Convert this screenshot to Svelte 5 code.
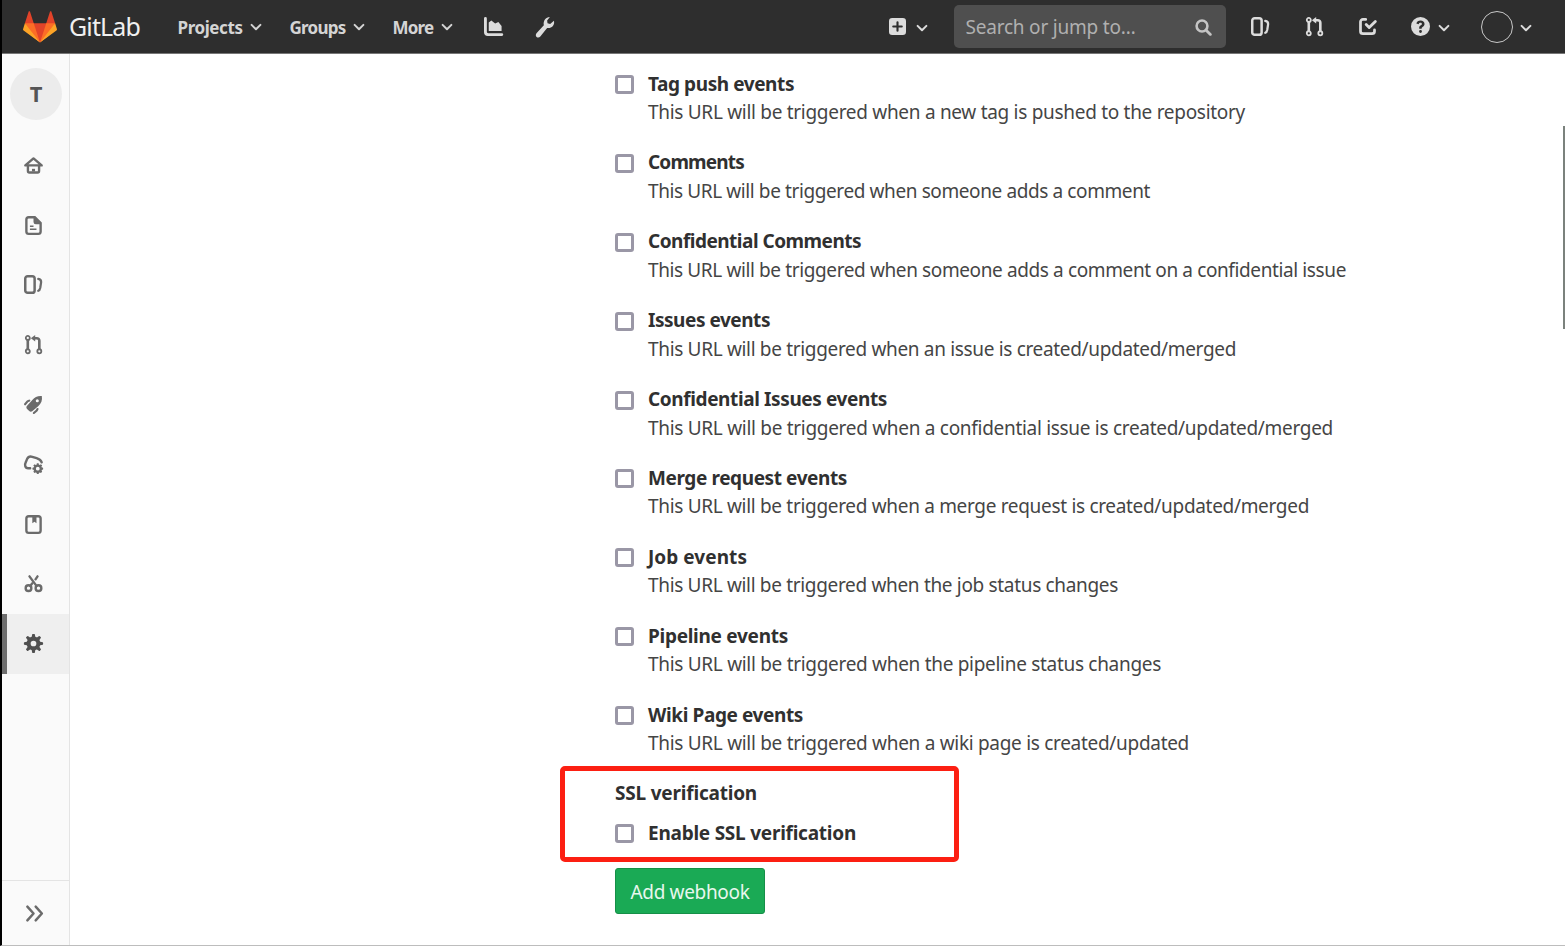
<script>
  const teeth = [0, 45, 90, 135, 180, 225, 270, 315]
    .map((a) => `<path d="M6.2 4.200 6.900.2c.2-.4 2-.4 2.200 0l.7 4z" transform="rotate(${a} 8 8)"/>`)
    .join('');
  const smallTeeth = [0, 45, 90, 135, 180, 225, 270, 315]
    .map((a) => `<rect x="10.7" y="7" width="1.8" height="2.4" rx=".4" transform="rotate(${a} 11.6 11.5)"/>`)
    .join('');
  const line = 'fill="none" stroke="currentColor"';

  const icons = {
    chevron: `<path ${line} stroke-width="2" stroke-linecap="round" stroke-linejoin="round" d="M3.6 5.9 8 10.3l4.4-4.4"/>`,
    chart: `<path d="M1.200 0a1.200 1.200 0 0 1 1.200 1.200v11.2c0 .7.4 1.200 1.200 1.200H15a1.200 1.200 0 0 1 0 2.400H3.2C1.2 16 0 14.8 0 12.8V1.200A1.200 1.200 0 0 1 1.200 0z"/><path d="M4 11.800V4.700l2.200-1.700 3.200 2.400 2.700-1.2 2.700 3.4v4.2z"/>`,
    wrench: `<path d="M12.100.3 10 3l.3 2.200 2 .5 2.900-2.500c.6 2.500-.7 4.900-3.300 5.500-.7.2-1.300.2-1.900 0l-5.2 6.600c-.8.900-2 1-2.800.3s-.8-2-.1-2.900L7.500 6.700C6.800 3.400 8.900.3 12.100.3z"/>`,
    plus: `<path fill-rule="evenodd" d="M3 0h10a3 3 0 0 1 3 3v10a3 3 0 0 1-3 3H3a3 3 0 0 1-3-3V3a3 3 0 0 1 3-3zm4 7H4a1 1 0 0 0 0 2h3v3a1 1 0 0 0 2 0V9h3a1 1 0 0 0 0-2H9V4a1 1 0 0 0-2 0z"/>`,
    search: `<circle cx="6.6" cy="6.6" r="5.1" ${line} stroke-width="2.4"/><path d="m10.5 10.5 4 4" ${line} stroke-width="2.6" stroke-linecap="round"/>`,
    issues: `<rect x="1.050" y="1.050" width="7.900" height="13.900" rx="2" ${line} stroke-width="2.100"/><path ${line} stroke-width="1.900" stroke-linecap="round" d="M12 3.200c2.200.3 2.600 1.200 2.400 3l-.7 4.500c-.3 1.600-.6 2.200-1.700 2.600"/>`,
    merge: `<g ${line}><circle cx="3.200" cy="2.500" r="1.700" stroke-width="1.500"/><circle cx="3.200" cy="13.700" r="1.700" stroke-width="1.500"/><circle cx="12.900" cy="13.700" r="1.700" stroke-width="1.500"/><path stroke-width="2.200" d="M3.200 4.300v7.500M8.200 2.700h2.600a2.100 2.100 0 0 1 2.100 2.100v7"/></g><path d="M9.400 0v5.400L5.800 2.700z"/>`,
    todo: `<path ${line} stroke-width="2.3" stroke-linecap="round" d="M6.500 2H4.2a2.100 2.100 0 0 0-2.100 2.100v7.800A2.100 2.100 0 0 0 4.200 14h7.600a2.100 2.100 0 0 0 2.100-2.100v-1"/><path ${line} stroke-width="2.4" stroke-linecap="round" stroke-linejoin="round" d="M6.900 6.400 9.400 8.900 14.600 3.700"/>`,
    help: `<path fill-rule="evenodd" d="M8 0a8 8 0 1 1 0 16A8 8 0 0 1 8 0zM6.9 9.1v.8h2.1v-.6c0-.4.4-.7 1-1.1.9-.6 1.4-1.3 1.4-2.3C11.400 4 9.900 3 8 3 6.200 3 4.900 3.900 4.500 5.500l2 .5c.2-.8.7-1.200 1.500-1.200.7 0 1.200.4 1.200 1 0 .5-.3.8-.9 1.200-.9.6-1.400 1.200-1.400 2.100zM8 11a1.200 1.200 0 1 0 0 2.400A1.200 1.200 0 0 0 8 11z"/>`,
    home: `<path ${line} stroke-width="2" stroke-linejoin="round" stroke-linecap="round" d="M1.100 7.900h13.800L8 2zM3.300 8v4.700c0 .8.4 1.200 1.200 1.200h7c.8 0 1.200-.4 1.200-1.200V8"/><path d="M6.700 10.800h2.600V13H6.700z"/>`,
    doc: `<path fill-rule="evenodd" d="M4 0h5.500L15 5.500V13a3 3 0 0 1-3 3H4a3 3 0 0 1-3-3V3a3 3 0 0 1 3-3zm0 2a1 1 0 0 0-1 1v10a1 1 0 0 0 1 1h8a1 1 0 0 0 1-1V7h-3a2 2 0 0 1-2-2V2z"/><path d="M5 8h3v1.200H5zM5 10.500h5.500v1.200H5z"/>`,
    rocket: `<path fill-rule="evenodd" d="M15 .8c.6 3.700-.4 6.200-3.100 8.700L6.900 13.700c-.9.700-1.900.4-2.700-.4l-1.400-1.400c-.8-.8-1.100-1.800-.4-2.700l4.600-5C9.200 1.600 11.500.5 15 .8zM11.200 3.500a1.300 1.300 0 1 0 0 2.600 1.300 1.300 0 0 0 0-2.600z"/><path ${line} stroke-width="1.800" stroke-linecap="round" d="M4.400 4.700 3 5.400.9 7.800M11.400 11.800 10.700 13l-2.400 2.100"/>`,
    cloud: `<path ${line} stroke-width="2" stroke-linecap="round" d="M5.200 11.200H3.500C.8 11 .3 8.200 1.600 5.800l1-2.400C3.500 1.500 5 .9 7 1.500l3.600 1.200c2.200.7 3.700 1.300 4.300 3.500"/><circle cx="11.600" cy="11.500" r="2.600" ${line} stroke-width="2"/>${smallTeeth}`,
    wiki: `<path fill-rule="evenodd" d="M4 0h8a3 3 0 0 1 3 3v10a3 3 0 0 1-3 3H4a3 3 0 0 1-3-3V3a3 3 0 0 1 3-3zm0 2a1 1 0 0 0-1 1v10a1 1 0 0 0 1 1h8a1 1 0 0 0 1-1V3a1 1 0 0 0-1-1h-1.500v5L8.800 5.700 7 7V2z"/>`,
    scissors: `<g ${line} stroke-width="2"><circle cx="3.800" cy="11.900" r="2.400"/><circle cx="12.200" cy="11.900" r="2.400"/><path stroke-linecap="round" d="m4.600 2 5.900 8M11.400 2 9.700 4.500M6.800 8l-1.400 2"/></g>`,
    gear: `<circle cx="8" cy="8" r="4.100" ${line} stroke-width="3.400"/>${teeth}`,
    collapse: `<path ${line} stroke-width="2.100" stroke-linejoin="round" stroke-linecap="round" d="M2 2.200 7.200 8 2 13.800M9 2.200 14.200 8 9 13.800"/>`
  };

  const menus = [
    { label: 'Projects', width: 65 },
    { label: 'Groups', width: 56 },
    { label: 'More', width: 41 }
  ];
  const sideItems = ['home', 'doc', 'issues', 'merge', 'rocket', 'cloud', 'wiki', 'scissors', 'gear'];

  const events = [
    { title: 'Tag push events', tw: 146, text: 'This URL will be triggered when a new tag is pushed to the repository', w: 597 },
    { title: 'Comments', tw: 96, text: 'This URL will be triggered when someone adds a comment', w: 502 },
    { title: 'Confidential Comments', tw: 213, text: 'This URL will be triggered when someone adds a comment on a confidential issue', w: 698 },
    { title: 'Issues events', tw: 122, text: 'This URL will be triggered when an issue is created/updated/merged', w: 588 },
    { title: 'Confidential Issues events', tw: 239, text: 'This URL will be triggered when a confidential issue is created/updated/merged', w: 685 },
    { title: 'Merge request events', tw: 199, text: 'This URL will be triggered when a merge request is created/updated/merged', w: 661 },
    { title: 'Job events', tw: 99, text: 'This URL will be triggered when the job status changes', w: 470 },
    { title: 'Pipeline events', tw: 140, text: 'This URL will be triggered when the pipeline status changes', w: 513 },
    { title: 'Wiki Page events', tw: 155, text: 'This URL will be triggered when a wiki page is created/updated', w: 541 }
  ];

  // Spreads a label's letters so that it takes the given width.
  function fit(node, width) {
    const natural = node.getBoundingClientRect().width;
    node.style.letterSpacing = `${(width - natural) / node.textContent.length}px`;
  }
</script>

{#snippet icon(name, cls = '')}
  <svg class="icon {cls}" viewBox="0 0 16 16" fill="currentColor" aria-hidden="true">{@html icons[name]}</svg>
{/snippet}

<div class="page">
  <header>
    <svg class="logo" viewBox="0 0 36 36" aria-hidden="true">
      <path fill="#e24329" d="M2 14l9.380 9v-9l-4-12.280c-.205-.632-1.176-.632-1.380 0z" />
      <path fill="#e24329" d="M34 14l-9.380 9v-9l4-12.280c.205-.632 1.176-.632 1.380 0z" />
      <path fill="#e24329" d="M18 34.380 3 14h30z" />
      <path fill="#fc6d26" d="M18 34.380 11.380 14H2l4 11z" />
      <path fill="#fc6d26" d="M18 34.380 24.620 14H34l-4 11z" />
      <path fill="#fca326" d="M2 14 .1 20.160c-.18.565 0 1.200.5 1.560L18 34.380z" />
      <path fill="#fca326" d="M34 14l1.900 6.160c.18.565 0 1.200-.5 1.560L18 34.380z" />
    </svg>
    <span class="brand"><span class="t" use:fit={71}>GitLab</span></span>
    <nav>
      {#each menus as m}
        <span class="menu"><span class="t" use:fit={m.width}>{m.label}</span>{@render icon('chevron', 'chev')}</span>
      {/each}
    </nav>
    {@render icon('chart', 'chart')}
    {@render icon('wrench', 'wrench')}
    <div class="right">
      <span class="drop new">{@render icon('plus', 'plus')}{@render icon('chevron', 'chev')}</span>
      <div class="search"><span class="t" use:fit={170}>Search or jump to…</span>{@render icon('search', 'lens')}</div>
      {@render icon('issues', 'nav1')}
      {@render icon('merge', 'nav2')}
      {@render icon('todo', 'nav3')}
      <span class="drop help">{@render icon('help')}{@render icon('chevron', 'chev')}</span>
      <span class="drop user"><span class="avatar"></span>{@render icon('chevron', 'chev')}</span>
    </div>
  </header>

  <div class="body">
    <aside>
      <div class="project">T</div>
      {#each sideItems as name}
        <div class="side" class:active={name === 'gear'}>{@render icon(name)}</div>
      {/each}
      <div class="toggle">{@render icon('collapse')}</div>
    </aside>

    <main>
      {#each events as e}
        <label class="event">
          <input type="checkbox" />
          <span class="copy">
            <strong><span class="t" use:fit={e.tw}>{e.title}</span></strong>
            <span class="desc"><span class="t" use:fit={e.w}>{e.text}</span></span>
          </span>
        </label>
      {/each}
      <section class="ssl">
        <strong><span class="t" use:fit={142}>SSL verification</span></strong>
        <label class="event">
          <input type="checkbox" />
          <strong><span class="t" use:fit={208}>Enable SSL verification</span></strong>
        </label>
        <div class="highlight"></div>
      </section>
      <button><span class="t" use:fit={119}>Add webhook</span></button>
    </main>
    <div class="thumb"></div>
  </div>
</div>

<style>
  :global(body) { background: #fff; overflow: hidden; }
  .page {
    box-sizing: border-box;
    width: 1565px;
    height: 946px;
    border-left: 2px solid #000;
    border-bottom: 1px solid #bdbdbd;
    display: flex;
    flex-direction: column;
    font-family: "Noto Sans", "Open Sans", sans-serif;
    font-size: 19px;
    color: #303030;
    overflow: hidden;
  }
  .t { display: inline-block; white-space: nowrap; }
  .icon { display: block; width: 19px; height: 19px; flex: none; overflow: visible; }
  .icon.chev { width: 16px; height: 16px; position: relative; top: 1px; }

  header {
    box-sizing: border-box;
    height: 54px;
    flex: none;
    display: flex;
    align-items: center;
    background: #2e2e2e;
    border-bottom: 1px solid #777;
    color: #dcdcdc;
    padding-left: 21px;
  }
  .logo { width: 34px; height: 34px; flex: none; }
  .brand { width: 71px; margin-left: 12px; font-size: 25px; color: #f0f0f0; padding-bottom: 2px; }
  nav { display: flex; gap: 26px; margin: 0 29px 0 37.500px; }
  .menu { display: flex; align-items: center; gap: 5px; font-size: 17px; font-weight: 700; color: #d4d4d4; padding-top: 1px; }
  .menu .icon.chev { top: 0; }
  .chart { margin-right: 31px; }
  .icon.wrench { width: 21px; height: 22px; }
  .right { display: flex; align-items: center; margin-left: auto; padding-right: 31.500px; }
  .drop { display: flex; align-items: center; }
  .new { gap: 8px; margin-right: 24px; }
  .icon.plus { width: 17px; height: 17px; }
  .search {
    box-sizing: border-box;
    width: 272px;
    height: 43px;
    border-radius: 5px;
    background: #4f4f4f;
    color: #b0b0b0;
    display: flex;
    align-items: center;
    justify-content: space-between;
    padding: 1px 14px 0 12px;
    margin-right: 25px;
  }
  .icon.lens { width: 17px; height: 17px; color: #c4c4c4; }
  .nav1 { margin-right: 35px; }
  .nav2 { margin-right: 34px; }
  .nav3 { margin-right: 34px; }
  .help { gap: 6px; margin-right: 29px; }
  .user { gap: 5px; }
  .avatar { box-sizing: border-box; width: 32px; height: 32px; border: 1px solid #c8c8c8; border-radius: 50%; }

  .body { flex: 1; min-height: 0; display: flex; position: relative; }
  aside {
    box-sizing: border-box;
    width: 68px;
    flex: none;
    background: #fafafa;
    border-right: 1px solid #e4e4e4;
    display: flex;
    flex-direction: column;
    color: #6b6b6b;
  }
  .project {
    box-sizing: border-box;
    width: 52px;
    height: 52px;
    margin: 14px 0 15.500px 8px;
    padding-bottom: 2px;
    border-radius: 50%;
    background: #ececec;
    color: #555;
    font-size: 22px;
    font-weight: 700;
    display: grid;
    place-items: center;
  }
  .side { box-sizing: border-box; height: 59.8px; flex: none; display: flex; align-items: center; padding-left: 21.500px; }
  .side.active { background: #efefef; color: #505050; border-left: 5px solid #6e6e6e; padding-left: 16.500px; }
  .toggle {
    margin-top: auto;
    height: 63px;
    border-top: 1px solid #e4e4e4;
    display: flex;
    align-items: center;
    padding: 1px 0 0 22.500px;
  }

  main { padding: 15.500px 0 0 545px; display: flex; flex-direction: column; align-items: flex-start; }
  .event { display: flex; align-items: flex-start; gap: 14px; margin-bottom: 21.875px; }
  .copy { display: flex; flex-direction: column; }
  strong { display: block; font-weight: 700; line-height: 28.500px; height: 28.500px; }
  .desc { line-height: 28.500px; height: 28.500px; color: #454545; }
  input {
    appearance: none;
    box-sizing: border-box;
    width: 19px;
    height: 19px;
    margin: 5.500px 0 0;
    border: 3px solid #9a97a6;
    border-radius: 3px;
    background: #fff;
  }
  .ssl { position: relative; }
  .ssl .event { margin: 11px 0 20.500px; }
  .highlight {
    position: absolute;
    left: -55px;
    top: -13px;
    width: 389px;
    height: 86px;
    border: 5px solid #fc1f12;
    border-radius: 5px;
  }
  button {
    box-sizing: border-box;
    width: 150px;
    height: 46px;
    padding: 2px 0 0;
    border: 1px solid #168f48;
    border-radius: 3px;
    background: #1aaa55;
    color: #e8f7ee;
    font: inherit;
  }
  .thumb { position: absolute; right: 0; top: 72px; width: 2px; height: 203px; background: #7b827d; }
</style>
